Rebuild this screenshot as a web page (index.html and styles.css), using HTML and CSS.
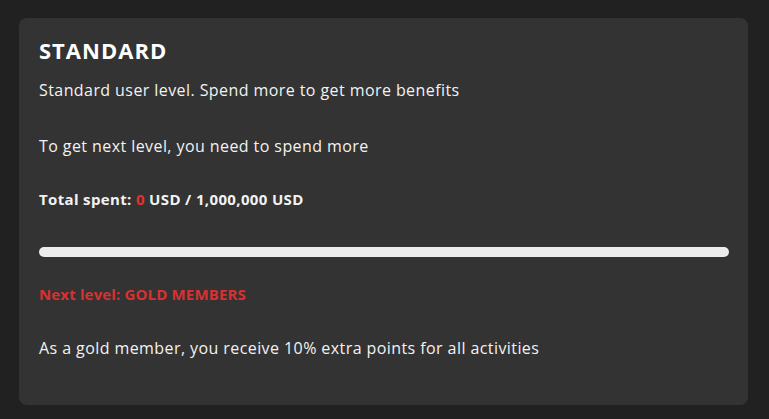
FILE: index.html
```html
<!DOCTYPE html>
<html>
<head>
<meta charset="utf-8">
<link rel="stylesheet" href="styles.css">
</head>
<body>
<div class="card">
  <h3 class="title">STANDARD</h3>
  <p class="desc">Standard user level. Spend more to get more benefits</p>
  <p class="next-info">To get next level, you need to spend more</p>
  <p class="spent">Total spent: <span class="red">0</span> USD / 1,000,000 USD</p>
  <div class="bar"><div class="fill" style="width:0%"></div></div>
  <p class="next-level">Next level: GOLD MEMBERS</p>
  <p class="benefit">As a gold member, you receive 10% extra points for all activities</p>
</div>
</body>
</html>
```
FILE: styles.css
```css
html, body {
  margin: 0;
  padding: 0;
  background: #212121;
}
body {
  padding: 18px 21px 14px 19px;
  font-family: "Open Sans", "DejaVu Sans", sans-serif;
  color: #f2f2f2;
}
.card {
  background: #333333;
  border-radius: 8px;
  padding: 20px 19px 45px 20px;
  display: flex;
  flex-direction: column;
}
.title {
  margin: 0;
  font-size: 22px;
  line-height: 24px;
  font-weight: 700;
  letter-spacing: 1px;
  color: #ffffff;
}
p {
  margin: 0;
  font-size: 16px;
  line-height: 24px;
  letter-spacing: 0.42px;
}
.desc { margin-top: 16px; }
.next-info { margin-top: 32px; }
.spent { margin-top: 29px; font-weight: 700; font-size: 15px; letter-spacing: 0.35px; }
.red { color: #e03232; }
.bar {
  margin-top: 36px;
  height: 10px;
  border-radius: 5px;
  background: #ececec;
  overflow: hidden;
}
.fill { height: 100%; background: #e03232; }
.next-level { margin-top: 25px; font-weight: 700; font-size: 15px; letter-spacing: 0.15px; color: #d93131; }
.benefit { margin-top: 30px; }
```
